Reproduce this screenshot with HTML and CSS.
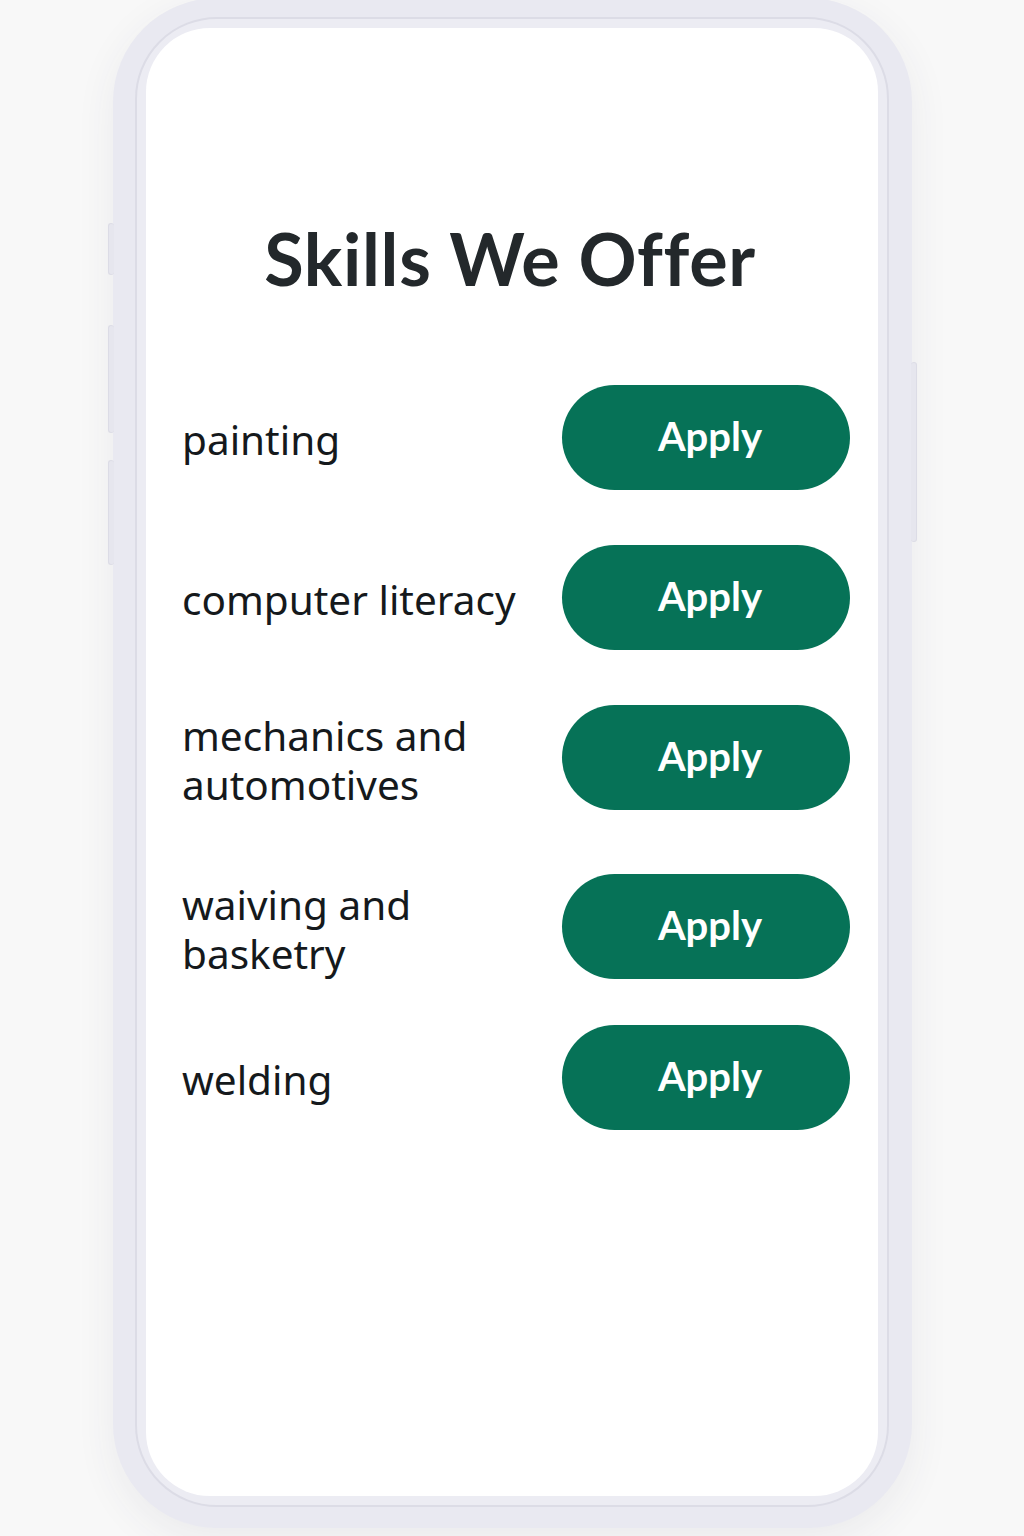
FILE: index.html
```html
<!DOCTYPE html>
<html lang="en">
<head>
<meta charset="utf-8">
<title>Skills We Offer</title>
<link rel="stylesheet" href="styles.css">
</head>
<body>
<div class="phone">
  <span class="side-btn side-btn--l1"></span>
  <span class="side-btn side-btn--l2"></span>
  <span class="side-btn side-btn--l3"></span>
  <span class="side-btn side-btn--r1"></span>
  <div class="ring">
    <main class="screen">
      <h1 class="title">Skills We Offer</h1>
      <ul class="skills">
        <li class="skill"><span class="skill__name">painting</span><button class="apply">Apply</button></li>
        <li class="skill"><span class="skill__name">computer literacy</span><button class="apply">Apply</button></li>
        <li class="skill"><span class="skill__name">mechanics and<br>automotives</span><button class="apply">Apply</button></li>
        <li class="skill skill--wide"><span class="skill__name">waiving and<br>basketry</span><button class="apply">Apply</button></li>
        <li class="skill skill--tight"><span class="skill__name">welding</span><button class="apply">Apply</button></li>
      </ul>
    </main>
  </div>
</div>
</body>
</html>
```
FILE: styles.css
```css
* { box-sizing: border-box; }
html, body { margin: 0; padding: 0; }
body {
  background: #f8f8f8;
  width: 1024px;
  height: 1536px;
  overflow: hidden;
}
.phone {
  position: relative;
  width: 799px;
  height: 1530px;
  margin: -2px 0 0 113px;
  padding: 19px 23px 21px 22px;
  background: #e9e9f1;
  border-radius: 104px;
  box-shadow: 0 12px 40px rgba(60, 60, 80, 0.07);
}
.side-btn {
  position: absolute;
  width: 6px;
  background: #e6e6ee;
  border: 1px solid #dcdce6;
  border-radius: 3px;
}
.side-btn--l1 { left: -5px; top: 225px; height: 52px; border-right: none; }
.side-btn--l2 { left: -5px; top: 327px; height: 108px; border-right: none; }
.side-btn--l3 { left: -5px; top: 462px; height: 105px; border-right: none; }
.side-btn--r1 { right: -5px; top: 364px; height: 180px; border-left: none; }
.ring {
  height: 100%;
  padding: 9px;
  border: 2px solid #dcdce6;
  border-radius: 82px;
  background: #ececf3;
}
.screen {
  height: 100%;
  background: #ffffff;
  border-radius: 64px;
  padding: 0 28px 0 36px;
  display: flex;
  flex-direction: column;
}
.title {
  margin: 190px 0 0;
  padding-right: 12px;
  text-align: center;
  font-family: "Lato", "Noto Sans", sans-serif;
  font-weight: 700;
  font-size: 72px;
  line-height: 80px;
  color: #23282b;
  letter-spacing: 0.7px;
}
.skills {
  list-style: none;
  margin: 87px 0 0;
  padding: 0;
  display: flex;
  flex-direction: column;
  gap: 55px;
}
.skill {
  display: flex;
  align-items: center;
  justify-content: space-between;
}
.skill--wide { margin-top: 9px; }
.skill--tight { margin-top: -9px; }
.skill__name {
  font-family: "Noto Sans", sans-serif;
  font-size: 40.5px;
  line-height: 49px;
  color: #15191c;
  padding-top: 4px;
}
.apply {
  flex: none;
  width: 288px;
  height: 105px;
  border: none;
  border-radius: 53px;
  background: #067257;
  color: #ffffff;
  font-family: "Lato", "Noto Sans", sans-serif;
  font-weight: 700;
  font-size: 40px;
  padding: 0 0 4px 8px;
  cursor: pointer;
}
```
